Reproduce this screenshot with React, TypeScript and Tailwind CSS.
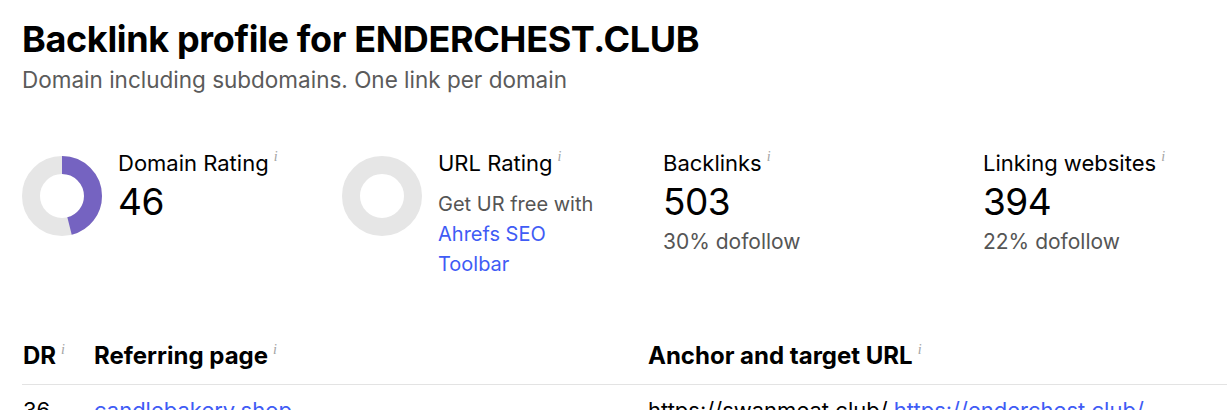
import React from "react";

const font = { fontFamily: "Inter, 'Noto Sans', sans-serif" };

function Info() {
  return (
    <sup className="ml-[5px] text-[14px] italic font-normal text-[#a3a3a3] font-['Liberation_Serif',serif] top-[-0.75em]">
      i
    </sup>
  );
}

function Donut({ value }: { value: number }) {
  const r = 31;
  const c = 2 * Math.PI * r;
  return (
    <svg width="80" height="80" viewBox="0 0 80 80" className="shrink-0">
      <circle cx="40" cy="40" r={r} fill="none" stroke="#e6e6e6" strokeWidth="18" />
      {value > 0 && (
        <circle
          cx="40"
          cy="40"
          r={r}
          fill="none"
          stroke="#7563c1"
          strokeWidth="18"
          strokeDasharray={`${(c * value) / 100} ${c}`}
          transform="rotate(-90 40 40)"
        />
      )}
    </svg>
  );
}

function Label({ children }: { children: React.ReactNode }) {
  return (
    <div className="text-[22px] leading-[28px] text-black whitespace-nowrap">
      {children}
      <Info />
    </div>
  );
}

function Stat({ label, value, sub }: { label: string; value: string; sub: string }) {
  return (
    <div className="w-[320px] shrink-0">
      <Label>{label}</Label>
      <div className="text-[37px] leading-[44px] text-black mt-[3px] tracking-[-0.5px]">{value}</div>
      <div className="text-[21px] leading-[28px] text-[#555] mt-[4px]">{sub}</div>
    </div>
  );
}

export default function App() {
  return (
    <div className="bg-white w-[1227px] h-[410px] overflow-hidden" style={font}>
      <div className="pl-[22px] pt-[19px]">
        <h1 className="text-[36px] leading-[40px] font-bold text-black tracking-[-0.35px]">
          Backlink profile for ENDERCHEST.CLUB
        </h1>
        <p className="text-[22.5px] leading-[28px] text-[#5b5b5b] mt-[7px]">
          Domain including subdomains. One link per domain
        </p>

        <div className="flex mt-[55px] h-[193px]">
          <div className="w-[320px] shrink-0 flex gap-[16px]">
            <div className="pt-[7px]">
              <Donut value={46} />
            </div>
            <div>
              <Label>Domain Rating</Label>
              <div className="text-[37px] leading-[44px] text-black mt-[3px] tracking-[-0.5px]">46</div>
            </div>
          </div>
          <div className="w-[321px] shrink-0 flex gap-[16px]">
            <div className="pt-[7px]">
              <Donut value={0} />
            </div>
            <div>
              <Label>URL Rating</Label>
              <div className="text-[20px] leading-[30px] text-[#555] mt-[12px] w-[170px]">
                Get UR free with{" "}
                <a className="text-[#3f5cf5]">Ahrefs SEO Toolbar</a>
              </div>
            </div>
          </div>
          <Stat label="Backlinks" value="503" sub="30% dofollow" />
          <Stat label="Linking websites" value="394" sub="22% dofollow" />
        </div>

        <div className="flex border-b border-[#e3e3e3] pb-[14px] font-bold text-[24px] leading-[28px] text-black">
          <div className="w-[72px] pl-[1px]">
            DR
            <Info />
          </div>
          <div className="w-[554px]">
            Referring page
            <Info />
          </div>
          <div>
            Anchor and target URL
            <Info />
          </div>
        </div>
        <div className="flex pt-[11px] text-[22px] leading-[28px] whitespace-nowrap">
          <div className="w-[72px] pl-[1px] text-black">36</div>
          <div className="w-[554px] text-[#3f5cf5]">candlebakery.shop</div>
          <div className="text-black">
            https://swanmeat.club/ <span className="text-[#3f5cf5]">https://enderchest.club/</span>
          </div>
        </div>
      </div>
    </div>
  );
}
